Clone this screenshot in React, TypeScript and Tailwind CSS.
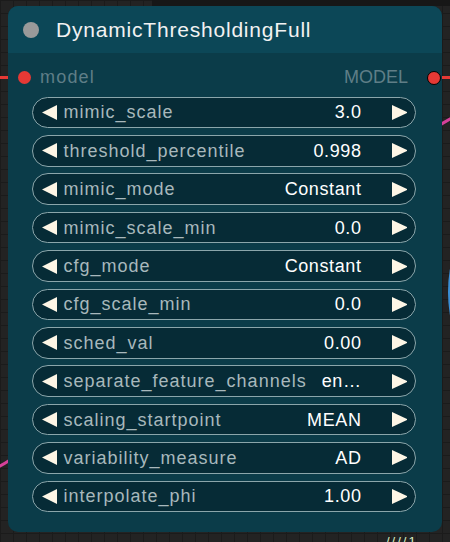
import React from "react";

const rows: [string, string][] = [
  ["mimic_scale", "3.0"],
  ["threshold_percentile", "0.998"],
  ["mimic_mode", "Constant"],
  ["mimic_scale_min", "0.0"],
  ["cfg_mode", "Constant"],
  ["cfg_scale_min", "0.0"],
  ["sched_val", "0.00"],
  ["separate_feature_channels", "en…"],
  ["scaling_startpoint", "MEAN"],
  ["variability_measure", "AD"],
  ["interpolate_phi", "1.00"],
];

const font = { fontFamily: '"Liberation Sans", Arial, sans-serif' };

function Arrow({ dir }: { dir: "l" | "r" }) {
  return (
    <svg width="15" height="15" viewBox="0 0 15 15" className="shrink-0">
      {dir === "l" ? (
        <polygon points="15,0 15,15 0,7.5" fill="#fdf6e6" />
      ) : (
        <polygon points="0,0 0,15 16,7.5" fill="#fdf6e6" />
      )}
    </svg>
  );
}

export default function App() {
  return (
    <div
      className="relative w-[450px] h-[542px] overflow-hidden bg-[#232323] bg-[linear-gradient(#1b1b1b_1px,transparent_1px),linear-gradient(90deg,#1b1b1b_1px,transparent_1px)] bg-[size:13px_13px]"
      style={font}
    >
      {/* canvas decorations */}
      <div className="absolute left-[152px] top-0 w-[298px] h-[6px] bg-[#171717]" />
      <div className="absolute left-0 top-[76px] w-[10px] h-[3px] bg-[#e53935]" />
      <div className="absolute left-[430px] top-[76px] w-[20px] h-[3px] bg-[#e53935]" />
      <svg className="absolute left-0 top-0" width="450" height="542">
        <path d="M436 128 Q444 122 452 118" stroke="#d6409a" strokeWidth="3" fill="none" />
        <path d="M-2 467 Q4 464 10 460" stroke="#d6409a" strokeWidth="3" fill="none" />
        <ellipse cx="470" cy="292" rx="22" ry="56" fill="#3a8fd6" />
      </svg>
      <div className="absolute left-[386px] top-[535px] text-[13px] leading-none text-[#d8efc4] tracking-[2px]">
        ////1
      </div>

      {/* node */}
      <div className="relative ml-[8px] mt-[6px] w-[434px] h-[526px] rounded-[10px] bg-[#0b3c49] flex flex-col">
        <div className="h-[47px] shrink-0 rounded-t-[10px] bg-[#0c4757] flex items-center pl-[15px]">
          <div className="w-[16px] h-[16px] rounded-full bg-[#9a9a9a]" />
          <div className="ml-[17px] text-[21px] leading-none text-[#f2f2f2] tracking-[0.8px]">
            DynamicThresholdingFull
          </div>
        </div>

        <div className="h-[43px] shrink-0 flex items-center relative pt-[5px]">
          <div className="absolute left-[9.5px] top-[17.5px] w-[13px] h-[13px] rounded-full bg-[#e53935]" />
          <div className="ml-[32px] text-[18px] leading-[18px] text-[#5f7e87] tracking-[1.2px]">model</div>
          <div className="ml-auto mr-[34px] text-[18px] leading-[18px] text-[#5f7e87]">MODEL</div>
          <div className="absolute right-[1.5px] top-[17.5px] w-[14px] h-[14px] rounded-full bg-[#e53935] border-[1.5px] border-black" />
        </div>

        <div className="flex flex-col gap-[6.9px] pl-[24px] pr-[26px] pt-[0.7px]">
          {rows.map(([label, value]) => (
            <div
              key={label}
              className="h-[31.5px] rounded-full border-[1.5px] border-[#8ba6ab] bg-[#062b36] flex items-center pl-[8.5px] pr-[8.5px]"
            >
              <Arrow dir="l" />
              <span className="ml-[7px] text-[18px] leading-none text-[#a8b8bc] tracking-[1px] whitespace-nowrap">
                {label}
              </span>
              <span className="ml-auto mr-[30px] text-[18px] leading-none text-white tracking-[0.6px] whitespace-nowrap">
                {value}
              </span>
              <Arrow dir="r" />
            </div>
          ))}
        </div>
      </div>
    </div>
  );
}
